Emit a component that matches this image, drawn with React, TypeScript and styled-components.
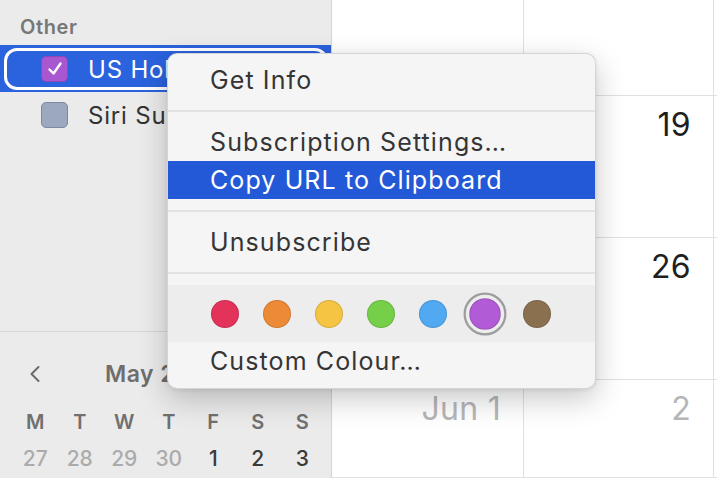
import React from "react";
import styled, { createGlobalStyle } from "styled-components";

const GlobalStyle = createGlobalStyle`
  html, body {
    margin: 0;
    padding: 0;
    width: 717px;
    height: 478px;
    overflow: hidden;
    font-family: Inter, "Liberation Sans", sans-serif;
    -webkit-font-smoothing: antialiased;
  }
`;

const swatches = ["#e3335b", "#ec8a36", "#f5c443", "#76cf49", "#50a9f1", "#b25bd6", "#8b7050"];

// week rows of the month grid; cells under the menu are left blank
const weeks = [
  [{ day: "", dim: false }, { day: "", dim: false }, { day: "", dim: false }],
  [{ day: "", dim: false }, { day: "19", dim: false }, { day: "", dim: false }],
  [{ day: "", dim: false }, { day: "26", dim: false }, { day: "", dim: false }],
  [{ day: "Jun 1", dim: true }, { day: "2", dim: true }, { day: "", dim: true }],
];

const dayNames = ["M", "T", "W", "T", "F", "S", "S"];
const dates = [
  { d: "27", out: true },
  { d: "28", out: true },
  { d: "29", out: true },
  { d: "30", out: true },
  { d: "1", out: false },
  { d: "2", out: false },
  { d: "3", out: false },
];

const Check = () => (
  <svg width="18" height="18" viewBox="0 0 18 18">
    <path d="M3.5 9.5 L7.5 13.5 L14.5 3.5" fill="none" stroke="#fff" strokeWidth="2.4" strokeLinecap="round" strokeLinejoin="round" />
  </svg>
);

const Chevron = () => (
  <svg width="12" height="18" viewBox="0 0 12 18">
    <path d="M9.5 2 L2.5 9 L9.5 16" fill="none" stroke="#6a6a6a" strokeWidth="2" strokeLinecap="round" strokeLinejoin="round" />
  </svg>
);

const App = () => {
  return (
    <Page>
      <GlobalStyle />
      <Sidebar>
        <SectionTitle>Other</SectionTitle>
        <SelectedRow>
          <FocusRing>
            <Box $color="#a957d1" $border="#9146b8">
              <Check />
            </Box>
            <RowLabel $selected>US Holidays</RowLabel>
          </FocusRing>
        </SelectedRow>
        <Row>
          <Box $color="#9ba8be" $border="#7d899e" />
          <RowLabel>Siri Suggestions</RowLabel>
        </Row>
        <Spacer />
        <MiniCal>
          <MiniHeader>
            <NavBtn>
              <Chevron />
            </NavBtn>
            <MonthTitle>May 2020</MonthTitle>
          </MiniHeader>
          <DayGrid>
            {dayNames.map((n, i) => (
              <DayName key={i}>{n}</DayName>
            ))}
            {dates.map((d) => (
              <DateCell key={d.d} $out={d.out}>
                {d.d}
              </DateCell>
            ))}
          </DayGrid>
        </MiniCal>
      </Sidebar>
      <Main>
        {weeks.map((w, r) =>
          w.map((c, i) => (
            <Cell key={r + "-" + i}>
              <CellNum $dim={c.dim}>{c.day}</CellNum>
            </Cell>
          ))
        )}
      </Main>
      <Menu>
        <MenuItem>Get Info</MenuItem>
        <Separator />
        <MenuItem>Subscription Settings…</MenuItem>
        <MenuItem $active>Copy URL to Clipboard</MenuItem>
        <Separator />
        <MenuItem>Unsubscribe</MenuItem>
        <Separator />
        <SwatchRow>
          {swatches.map((c, i) => (
            <SwatchSlot key={c} $picked={i === 5}>
              <Swatch $color={c} />
            </SwatchSlot>
          ))}
        </SwatchRow>
        <MenuItem>Custom Colour…</MenuItem>
      </Menu>
    </Page>
  );
};

export default App;

const Page = styled.div`
  position: relative;
  display: grid;
  grid-template-columns: 332px 1fr;
  width: 717px;
  height: 478px;
  background: #fff;
`;

const Sidebar = styled.div`
  display: flex;
  flex-direction: column;
  background: #ebebeb;
  border-right: 1px solid #d4d4d4;
`;

const SectionTitle = styled.div`
  height: 45px;
  box-sizing: border-box;
  padding: 14px 0 0 20px;
  font-size: 20px;
  line-height: 26px;
  font-weight: 600;
  letter-spacing: 0.6px;
  color: #777;
`;

const SelectedRow = styled.div`
  height: 47px;
  box-sizing: border-box;
  padding: 3px 3px 2px 4px;
  background: #2b62dd;
`;

const FocusRing = styled.div`
  height: 100%;
  box-sizing: border-box;
  border: 3px solid #fff;
  border-radius: 13px;
  display: flex;
  align-items: center;
  padding-left: 34px;
  gap: 20px;
`;

const Row = styled.div`
  height: 46px;
  display: flex;
  align-items: center;
  padding-left: 41px;
  gap: 20px;
`;

const Box = styled.div<{ $color: string; $border: string }>`
  width: 27px;
  height: 26px;
  box-sizing: border-box;
  border-radius: 5px;
  background: ${(p) => p.$color};
  border: 1px solid ${(p) => p.$border};
  display: flex;
  align-items: center;
  justify-content: center;
`;

const RowLabel = styled.span<{ $selected?: boolean }>`
  font-size: 24px;
  letter-spacing: 0.8px;
  color: ${(p) => (p.$selected ? "#fff" : "#333")};
  white-space: nowrap;
`;

const Spacer = styled.div`
  flex: 1;
`;

const MiniCal = styled.div`
  height: 147px;
  box-sizing: border-box;
  border-top: 1px solid #d6d6d6;
  padding: 28px 8px 0 13px;
`;

const MiniHeader = styled.div`
  display: flex;
  align-items: center;
  height: 28px;
  padding-left: 16px;
`;

const NavBtn = styled.div`
  width: 12px;
  height: 18px;
  margin-right: 64px;
`;

const MonthTitle = styled.div`
  font-size: 23px;
  font-weight: 600;
  letter-spacing: 0.5px;
  color: #6e6e6e;
`;

const DayGrid = styled.div`
  display: grid;
  grid-template-columns: repeat(7, 44.5px);
  grid-auto-rows: 36px;
  margin-top: 16px;
`;

const DayName = styled.div`
  display: flex;
  align-items: center;
  justify-content: center;
  font-size: 20px;
  font-weight: 600;
  color: #707070;
`;

const DateCell = styled.div<{ $out: boolean }>`
  display: flex;
  align-items: center;
  justify-content: center;
  font-size: 21px;
  font-weight: 500;
  color: ${(p) => (p.$out ? "#ababab" : "#3a3a3a")};
`;

const Main = styled.div`
  display: grid;
  grid-template-columns: 192px 190px 1fr;
  grid-template-rows: 96px 142px 142px 1fr;
`;

const Cell = styled.div`
  box-sizing: border-box;
  border-right: 1px solid #e1e1e1;
  border-bottom: 1px solid #e1e1e1;
  display: flex;
  justify-content: flex-end;
  padding: 10px 22px 0 0;
`;

const CellNum = styled.div<{ $dim: boolean }>`
  font-size: 32px;
  line-height: 38px;
  letter-spacing: 0.3px;
  color: ${(p) => (p.$dim ? "#b6b6b6" : "#1f1f1f")};
`;

const Menu = styled.div`
  position: absolute;
  left: 167px;
  top: 53px;
  width: 429px;
  box-sizing: border-box;
  padding: 7px 0 8px;
  background: #f5f5f5;
  border: 1px solid rgba(0, 0, 0, 0.13);
  border-radius: 10px;
  box-shadow: 0 10px 30px rgba(0, 0, 0, 0.22), 0 1px 4px rgba(0, 0, 0, 0.08);
  overflow: hidden;
`;

const MenuItem = styled.div<{ $active?: boolean }>`
  height: 38px;
  display: flex;
  align-items: center;
  padding-left: 42px;
  font-size: 25px;
  letter-spacing: 1.1px;
  color: ${(p) => (p.$active ? "#fff" : "#353535")};
  background: ${(p) => (p.$active ? "#2359d7" : "transparent")};
`;

const Separator = styled.div`
  height: 2px;
  margin: 11px 0;
  background: #e2e2e2;
`;

const SwatchRow = styled.div`
  height: 57px;
  display: flex;
  align-items: center;
  padding-left: 38px;
  gap: 14px;
  background: #ededed;
`;

const SwatchSlot = styled.div<{ $picked: boolean }>`
  width: 38px;
  height: 38px;
  box-sizing: border-box;
  border-radius: 50%;
  display: flex;
  align-items: center;
  justify-content: center;
  border: 2px solid ${(p) => (p.$picked ? "#9d9d9d" : "transparent")};
  transform: ${(p) => (p.$picked ? "scale(1.13)" : "none")};
`;

const Swatch = styled.div<{ $color: string }>`
  width: 28px;
  height: 28px;
  box-sizing: border-box;
  border-radius: 50%;
  background: ${(p) => p.$color};
  border: 1px solid rgba(0, 0, 0, 0.12);
`;
